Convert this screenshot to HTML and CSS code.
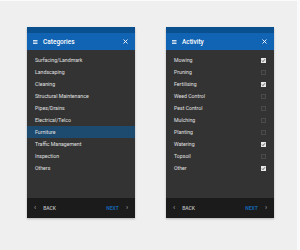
FILE: index.html
```html
<!DOCTYPE html>
<html>
<head>
<meta charset="utf-8">
<link rel="stylesheet" href="styles.css">
</head>
<body>
<div class="stage">
  <div class="phone">
    <div class="status"></div>
    <div class="appbar">
      <svg class="menu" viewBox="0 0 4.5 4" width="4.5" height="4"><rect x="0" y="0" width="4.5" height="0.8" fill="#fff"/><rect x="0" y="1.6" width="4.5" height="0.8" fill="#fff"/><rect x="0" y="3.2" width="4.5" height="0.8" fill="#fff"/></svg>
      <span class="title">Categories</span>
      <svg class="close" viewBox="0 0 5 5" width="5" height="5"><path d="M0.5 0.5L4.5 4.5M4.5 0.5L0.5 4.5" stroke="#fff" stroke-width="0.9"/></svg>
    </div>
    <ul class="list">
      <li class="row">Surfacing/Landmark</li>
      <li class="row">Landscaping</li>
      <li class="row">Cleaning</li>
      <li class="row">Structural Maintenance</li>
      <li class="row">Pipes/Drains</li>
      <li class="row">Electrical/Telco</li>
      <li class="row selected">Furniture</li>
      <li class="row">Traffic Management</li>
      <li class="row">Inspection</li>
      <li class="row">Others</li>
    </ul>
    <div class="nav">
      <span class="chev">‹</span><span class="back">BACK</span>
      <span class="spacer"></span>
      <span class="next">NEXT</span><span class="chev">›</span>
    </div>
  </div>
  <div class="phone">
    <div class="status"></div>
    <div class="appbar">
      <svg class="menu" viewBox="0 0 4.5 4" width="4.5" height="4"><rect x="0" y="0" width="4.5" height="0.8" fill="#fff"/><rect x="0" y="1.6" width="4.5" height="0.8" fill="#fff"/><rect x="0" y="3.2" width="4.5" height="0.8" fill="#fff"/></svg>
      <span class="title">Activity</span>
      <svg class="close" viewBox="0 0 5 5" width="5" height="5"><path d="M0.5 0.5L4.5 4.5M4.5 0.5L0.5 4.5" stroke="#fff" stroke-width="0.9"/></svg>
    </div>
    <ul class="list">
      <li class="row">Mowing<span class="box on"><svg viewBox="0 0 5 5" width="5" height="5"><path d="M1 2.6L2 3.6L4 1.3" stroke="#333" stroke-width="0.8" fill="none"/></svg></span></li>
      <li class="row">Pruning<span class="box"></span></li>
      <li class="row">Fertilising<span class="box on"><svg viewBox="0 0 5 5" width="5" height="5"><path d="M1 2.6L2 3.6L4 1.3" stroke="#333" stroke-width="0.8" fill="none"/></svg></span></li>
      <li class="row">Weed Control<span class="box"></span></li>
      <li class="row">Pest Control<span class="box"></span></li>
      <li class="row">Mulching<span class="box"></span></li>
      <li class="row">Planting<span class="box"></span></li>
      <li class="row">Watering<span class="box on"><svg viewBox="0 0 5 5" width="5" height="5"><path d="M1 2.6L2 3.6L4 1.3" stroke="#333" stroke-width="0.8" fill="none"/></svg></span></li>
      <li class="row">Topsoil<span class="box"></span></li>
      <li class="row">Other<span class="box on"><svg viewBox="0 0 5 5" width="5" height="5"><path d="M1 2.6L2 3.6L4 1.3" stroke="#333" stroke-width="0.8" fill="none"/></svg></span></li>
    </ul>
    <div class="nav">
      <span class="chev">‹</span><span class="back">BACK</span>
      <span class="spacer"></span>
      <span class="next">NEXT</span><span class="chev">›</span>
    </div>
  </div>
</div>
</body>
</html>
```
FILE: styles.css
```css
html, body {
  margin: 0;
  padding: 0;
}
body {
  width: 300px;
  height: 250px;
  background: #efefef;
  font-family: Roboto, "Liberation Sans", sans-serif;
  overflow: hidden;
}
.stage {
  box-sizing: border-box;
  width: 300px;
  height: 250px;
  border-top: 1px solid #fafafa;
  border-right: 3px solid #fafafa;
  display: flex;
  padding: 26px 0 0 27px;
  gap: 31px;
}
.phone {
  width: 108px;
  height: 191px;
  display: flex;
  flex-direction: column;
  background: #333333;
  box-shadow: 0 1px 2px rgba(0,0,0,0.25);
}
.status {
  height: 6px;
  background: #0a4f8e;
}
.appbar {
  height: 17px;
  background: #1163b3;
  display: flex;
  align-items: center;
  padding: 0 7px 0 6px;
}
.menu {
  display: block;
  flex: none;
}
.title {
  color: #fff;
  font-size: 6.5px;
  font-weight: 500;
  margin-left: 5.5px;
  flex: 1;
}
.close {
  display: block;
  flex: none;
}
.list {
  list-style: none;
  margin: 0;
  padding: 4px 0 0 0;
  flex: 1;
}
.row {
  height: 12px;
  display: flex;
  align-items: center;
  justify-content: space-between;
  padding: 0 8px;
  font-size: 5.2px;
  color: #e0e0e0;
}
.row.selected {
  background: #1d4a6f;
}
.box {
  width: 5px;
  height: 5px;
  box-sizing: border-box;
  border: 0.6px solid #4a4a4a;
  background: #363636;
}
.box.on {
  border: none;
  background: #e8e8e8;
}
.box svg {
  display: block;
}
.nav {
  height: 20px;
  background: #1b1b1b;
  display: flex;
  align-items: center;
  padding: 0 7px;
  font-size: 5px;
  font-weight: 500;
}
.chev {
  color: #9a9a9a;
  font-size: 7px;
}
.back {
  color: #bdbdbd;
  margin-left: 7px;
}
.spacer {
  flex: 1;
}
.next {
  color: #1563b0;
  margin-right: 7px;
  font-weight: 700;
}
```
